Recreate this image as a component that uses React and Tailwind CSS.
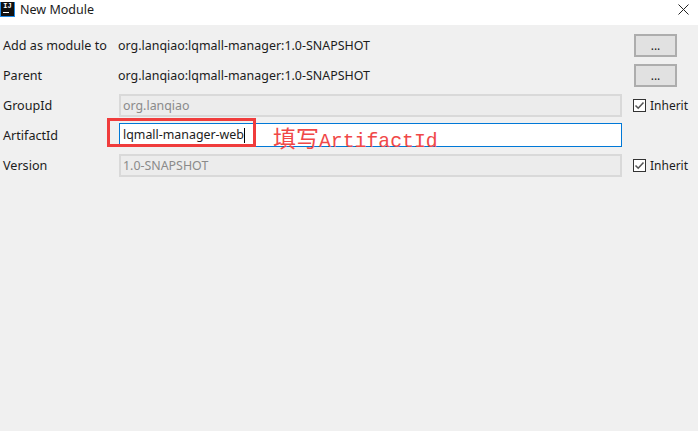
import React from 'react';

const font = { fontFamily: '"Noto Sans", "Noto Sans CJK SC", sans-serif' };

const Label = ({ children }) => (
  <div className="w-[116px] pl-[3px] pt-[2px] shrink-0 text-[12.6px] text-[#1c1c1c]">{children}</div>
);

const BrowseButton = () => (
  <button className="ml-auto mr-[21px] w-[43px] h-[23px] border-2 border-[#adadad] bg-[#e1e1e1] text-[12px] leading-none text-[#1c1c1c]">
    ...
  </button>
);

const Inherit = () => (
  <label className="ml-[11px] flex items-center gap-[4px] text-[12px] text-[#1c1c1c]">
    <span className="w-[13px] h-[13px] border border-[#333333] bg-white flex items-center justify-center">
      <svg width="11" height="11" viewBox="0 0 11 11" fill="none">
        <path d="M1.5 5.5 L4.2 8.2 L9.5 2.5" stroke="#555555" strokeWidth="1.6" />
      </svg>
    </span>
    Inherit
  </label>
);

const DisabledField = ({ value }) => (
  <div className="ml-[3px] w-[503px] h-[23px] border-2 border-[#d9d9d9] bg-[#ececec] pl-[2px] pt-[2px] flex items-center text-[12.4px] text-[#8a8a8a]">
    {value}
  </div>
);

const Row = ({ children }) => <div className="flex items-center h-[23px]">{children}</div>;

export default function App() {
  return (
    <div className="w-[698px] h-[431px] bg-[#f0f0f0] flex flex-col overflow-hidden" style={font}>
      <div className="h-[25px] bg-white flex items-center shrink-0 pb-[6px]">
        <div className="w-[15px] h-[15px] bg-[#111111] border-x border-b border-[#1e88e5] flex flex-col items-center justify-start">
          <span className="text-[7px] leading-[9px] font-bold text-white" style={{ fontFamily: '"Liberation Mono", monospace' }}>IJ</span>
          <span className="w-[6px] h-[1px] bg-white self-start ml-[2px] mt-[1px]" />
        </div>
        <span className="ml-[5px] pt-[2px] text-[12.5px] text-[#1c1c1c]">New Module</span>
        <svg className="ml-auto mr-[9px]" width="11" height="11" viewBox="0 0 11 11" fill="none">
          <path d="M0.5 0.5 L10.5 10.5 M10.5 0.5 L0.5 10.5" stroke="#222222" strokeWidth="1" />
        </svg>
      </div>

      <div className="flex flex-col gap-[7px] pt-[9px]">
        <Row>
          <Label>Add as module to</Label>
          <span className="ml-[2px] pt-[2px] text-[12.45px] text-[#1c1c1c]">org.lanqiao:lqmall-manager:1.0-SNAPSHOT</span>
          <BrowseButton />
        </Row>
        <Row>
          <Label>Parent</Label>
          <span className="ml-[2px] pt-[2px] text-[12.45px] text-[#1c1c1c]">org.lanqiao:lqmall-manager:1.0-SNAPSHOT</span>
          <BrowseButton />
        </Row>
        <Row>
          <Label>GroupId</Label>
          <DisabledField value="org.lanqiao" />
          <Inherit />
        </Row>
        <Row>
          <Label>ArtifactId</Label>
          <div className="relative ml-[3px] mb-[1px] w-[503px] h-[24px] border border-[#0078d7] bg-white pl-[3px] pt-[1px] flex items-center text-[12.4px] text-[#1c1c1c]">
            lqmall-manager-web
            <span className="w-[1px] h-[15px] bg-black" />
            <div className="absolute left-[-13px] top-[-6px] w-[149px] h-[29px] border-[3px] border-[#f03c3c]" />
            <div className="absolute left-[153px] top-[0px] text-[#f04848] leading-[26px] whitespace-nowrap">
              <span className="text-[23px]" style={{ fontFamily: '"Noto Sans CJK SC", sans-serif' }}>填写</span>
              <span className="text-[19.8px]" style={{ fontFamily: '"Liberation Mono", monospace' }}>ArtifactId</span>
            </div>
          </div>
        </Row>
        <Row>
          <Label>Version</Label>
          <DisabledField value="1.0-SNAPSHOT" />
          <Inherit />
        </Row>
      </div>
    </div>
  );
}
